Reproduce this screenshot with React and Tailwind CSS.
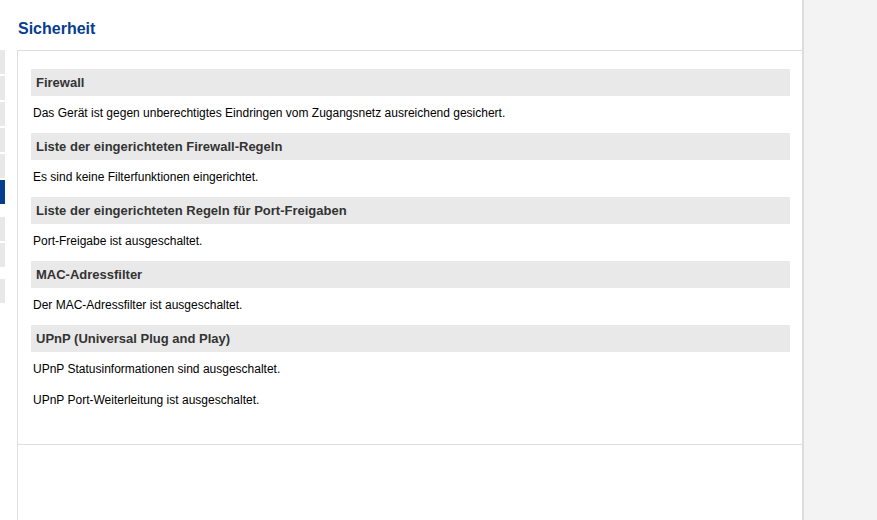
const sections = [
  {
    title: 'Firewall',
    lines: ['Das Gerät ist gegen unberechtigtes Eindringen vom Zugangsnetz ausreichend gesichert.'],
  },
  {
    title: 'Liste der eingerichteten Firewall-Regeln',
    lines: ['Es sind keine Filterfunktionen eingerichtet.'],
  },
  {
    title: 'Liste der eingerichteten Regeln für Port-Freigaben',
    lines: ['Port-Freigabe ist ausgeschaltet.'],
  },
  {
    title: 'MAC-Adressfilter',
    lines: ['Der MAC-Adressfilter ist ausgeschaltet.'],
  },
  {
    title: 'UPnP (Universal Plug and Play)',
    lines: ['UPnP Statusinformationen sind ausgeschaltet.', 'UPnP Port-Weiterleitung ist ausgeschaltet.'],
  },
];

function SideStrip() {
  return (
    <div className="w-[5px] shrink-0 pt-[50px] flex flex-col">
      <div className="h-[24px] bg-[#e8e8e8]" />
      <div className="h-[24px] mt-[2px] bg-[#e8e8e8]" />
      <div className="h-[24px] mt-[2px] bg-[#e8e8e8]" />
      <div className="h-[24px] mt-[2px] bg-[#e8e8e8]" />
      <div className="h-[24px] mt-[2px] bg-[#e8e8e8]" />
      <div className="h-[24px] mt-[2px] bg-[#063d8f]" />
      <div className="h-[24px] mt-[13px] bg-[#e8e8e8]" />
      <div className="h-[24px] mt-[2px] bg-[#e8e8e8]" />
      <div className="h-[24px] mt-[12px] bg-[#e8e8e8]" />
    </div>
  );
}

export default function App() {
  return (
    <div className="flex h-[520px] overflow-hidden bg-white font-['Liberation_Sans',Arial,sans-serif]">
      <SideStrip />
      <main className="w-[799px] shrink-0 pl-[12px] border-r-2 border-[#dddddd] bg-white flex flex-col">
        <h1 className="h-[50px] flex items-center pt-[8px] pl-[1px] text-[16px] font-bold text-[#063d8f]">Sicherheit</h1>
        <section className="border-t border-l border-[#dedede] pt-[18px] pl-[13px] pr-[12px] pb-[37px]">
          {sections.map((s, i) => (
            <div key={s.title} className={i > 0 ? 'mt-[13px]' : ''}>
              <h2 className="h-[27px] flex items-center pl-[5px] bg-[#e9e9e9] text-[13px] font-bold text-[#333333]">
                {s.title}
              </h2>
              {s.lines.map((line, j) => (
                <p key={line} className={`${j > 0 ? 'mt-[17px]' : 'mt-[10px]'} pl-[2px] text-[12px] leading-[14px] text-black`}>
                  {line}
                </p>
              ))}
            </div>
          ))}
        </section>
        <div className="flex-1 border-t border-l border-[#dedede]" />
      </main>
      <div className="flex-1 bg-[#f3f3f3]" />
    </div>
  );
}
